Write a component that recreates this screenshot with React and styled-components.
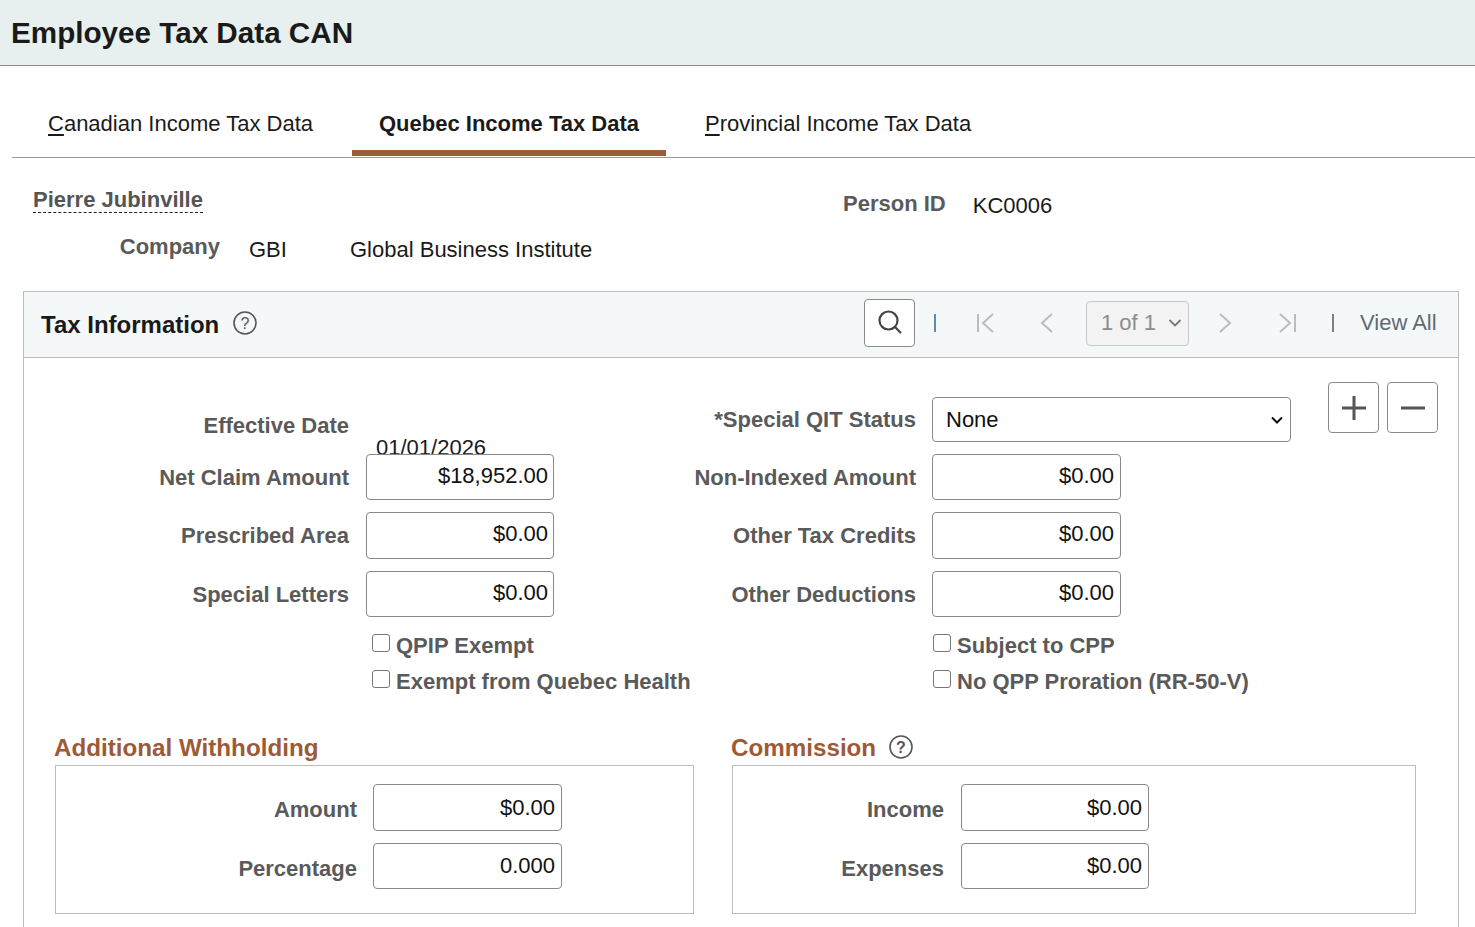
import React from "react";
import styled, { createGlobalStyle } from "styled-components";

const Global = createGlobalStyle`
  html, body { margin: 0; padding: 0; background: #fff; height: 927px; overflow: hidden; }
  body { font-family: "Liberation Sans", Arial, sans-serif; color: #000; }
  input, select { font-family: inherit; }
`;

const Page = styled.div`
  width: 1475px;
  height: 927px;
  overflow: hidden;
`;
const Banner = styled.header`
  height: 65px;
  box-sizing: content-box;
  background: #e8f0ef;
  border-bottom: 1px solid #8a8a8a;
  display: flex;
  align-items: center;
  padding-left: 11px;
`;
const Title = styled.h1`
  margin: 0;
  font-size: 29.65px;
  font-weight: 700;
  color: #1a1a1a;
`;
const TabBar = styled.nav`
  margin: 34px 0 0 12px;
  height: 57px;
  border-bottom: 1px solid #9a9a9a;
  display: flex;
  padding-left: 9px;
  gap: 12px;
`;
const Tab = styled.a`
  box-sizing: border-box;
  height: 56px;
  border-bottom: 6px solid ${p => (p.$active ? "#9d5a36" : "transparent")};
  padding: 0 27px 2px;
  display: flex;
  align-items: center;
  font-size: 22px;
  font-weight: ${p => (p.$active ? 700 : 400)};
  color: #1a1a1a;
  u { text-underline-offset: 3px; }
`;
const InfoRow = styled.div`
  display: flex;
  align-items: center;
  padding: ${p => p.$pt || 0}px 0 0 33px;
  height: ${p => p.$h}px;
`;
const PersonLink = styled.a`
  width: 810px;
  margin-top: -11px;
  font-size: 22px;
  font-weight: 700;
  color: #555;
  span { border-bottom: 1px dashed #222; padding-bottom: 0; }
`;
const InfoLabel = styled.span`
  font-size: 22px;
  font-weight: 700;
  color: #5a5a5a;
  text-align: right;
  width: ${p => (p.$w ? p.$w + "px" : "auto")};
  margin-top: ${p => p.$mt || -4}px;
`;
const InfoValue = styled.span`
  font-size: 22px;
  color: #1a1a1a;
  margin-left: ${p => p.$ml || 0}px;
  width: ${p => (p.$w ? p.$w + "px" : "auto")};
`;
const Panel = styled.section`
  margin: 20px 16px 0 23px;
  border: 1px solid #bdbdbd;
  border-bottom: none;
  height: 640px;
`;
const PanelHead = styled.div`
  height: 65px;
  background: #f4f8f8;
  border-bottom: 1px solid #bdbdbd;
  display: flex;
  align-items: center;
  padding: 0 22px 0 17px;
`;
const PanelTitle = styled.h2`
  margin: 0 13px 0 0;
  font-size: 24px;
  font-weight: 700;
  color: #1a1a1a;
`;
const HelpMark = styled.svg`
  flex: none;
  margin-bottom: ${p => p.$mb || 0}px;
`;
const HelpIcon = ({ mb }) => (
  <HelpMark $mb={mb} width="26" height="26" viewBox="0 0 26 26" fill="none">
    <circle cx="13" cy="13" r="11" stroke="#555" strokeWidth="1.6" />
    <text x="13" y="18.5" textAnchor="middle" fontSize="16" fontFamily="Liberation Sans" fill="#555">?</text>
  </HelpMark>
);
const Pager = styled.div`
  margin-left: auto;
  margin-bottom: 3px;
  display: flex;
  align-items: center;
`;
const SearchBtn = styled.button`
  width: 51px;
  height: 48px;
  padding: 0;
  background: #fff;
  border: 1px solid #8a8a8a;
  border-radius: 4px;
  display: flex;
  align-items: center;
  justify-content: center;
`;
const Slot = styled.span`
  width: ${p => p.$w}px;
  display: flex;
  align-items: center;
  justify-content: center;
`;
const Sep = styled.i`
  width: 2px;
  height: 18px;
  background: ${p => p.$c};
`;
const PageSelect = styled.div`
  margin-left: 8px;
  width: 103px;
  height: 45px;
  box-sizing: border-box;
  border: 1px solid #c9c9c9;
  border-radius: 4px;
  background: #f3f3f3;
  color: #8c8c8c;
  font-size: 22px;
  display: flex;
  align-items: center;
  justify-content: space-between;
  padding: 0 6px 0 14px;
`;
const ViewAll = styled.a`
  margin-left: 7px;
  width: 76px;
  white-space: nowrap;
  font-size: 22px;
  color: #5f6b73;
`;
const Body = styled.div`
  padding-top: 24px;
`;
const Row = styled.div`
  display: grid;
  grid-template-columns: 325px 205px 362px 1fr;
  height: ${p => p.$h || 46.3}px;
  margin-bottom: ${p => (p.$mb === undefined ? 12 : p.$mb)}px;
`;
const Label = styled.label`
  align-self: ${p => p.$self || "center"};
  text-align: right;
  font-size: 22px;
  font-weight: 700;
  color: #5a5a5a;
  white-space: nowrap;
  padding-top: ${p => (p.$pt === undefined ? 2 : p.$pt)}px;
  padding-bottom: ${p => p.$pb || 0}px;
`;
const Cell = styled.div`
  padding-left: ${p => p.$pl || 16}px;
  min-width: 0;
`;
const Value = styled.input`
  display: block;
  box-sizing: border-box;
  width: ${p => p.$w || 188}px;
  height: 100%;
  background: #fff;
  border: 1px solid #8a8a8a;
  border-radius: 4px;
  text-align: right;
  font-size: 22px;
  color: #111;
  padding: 0 ${p => p.$pr || 6}px ${p => (p.$pb === undefined ? 2 : p.$pb)}px 6px;
  outline: none;
`;
const DateText = styled.div`
  padding: 53px 0 0 10px;
  height: 60px;
  box-sizing: border-box;
  font-size: 22px;
  color: #1a1a1a;
  white-space: nowrap;
`;
const SelectCell = styled(Cell)`
  display: flex;
`;
const StatusSelect = styled.select`
  appearance: none;
  align-self: flex-end;
  width: 359px;
  height: 45px;
  box-sizing: border-box;
  border: 1px solid #8a8a8a;
  border-radius: 4px;
  background: #fff url("data:image/svg+xml,%3Csvg xmlns='http://www.w3.org/2000/svg' width='12' height='8' viewBox='0 0 12 8' fill='none' stroke='%23111' stroke-width='2'%3E%3Cpath d='M1 1.500l5 5 5-5'/%3E%3C/svg%3E") no-repeat right 7px center;
  font-size: 22px;
  color: #111;
  padding: 0 24px 0 13px;
`;
const EditButtons = styled.div`
  margin-left: 37px;
  display: flex;
  gap: 8px;
`;
const EditBtn = styled.button`
  width: 51px;
  height: 51px;
  padding: 0;
  background: #fff;
  border: 1px solid #8a8a8a;
  border-radius: 4px;
  display: flex;
  align-items: center;
  justify-content: center;
`;
const CheckRow = styled.div`
  display: grid;
  grid-template-columns: 348px 561px 1fr;
  height: 36px;
  align-items: center;
`;
const CheckLabel = styled.label`
  grid-column: ${p => p.$col};
  display: flex;
  align-items: center;
  font-size: 22px;
  font-weight: 700;
  color: #5a5a5a;
  white-space: nowrap;
`;
const Check = styled.input`
  appearance: none;
  width: 18px;
  height: 18px;
  margin: -6px 6px 0 0;
  border: 1px solid #767676;
  border-radius: 3px;
  background: #fff;
  flex: none;
`;
const Groups = styled.div`
  display: flex;
  margin-top: 31px;
  padding-left: 31px;
`;
const Group = styled.div`
  width: ${p => p.$w}px;
  margin-right: ${p => p.$mr || 0}px;
`;
const GroupTitle = styled.h3`
  margin: 0 0 0 -1px;
  height: 34px;
  display: flex;
  align-items: center;
  gap: 12px;
  font-size: 24.2px;
  font-weight: 700;
  color: #9d5a36;
  white-space: nowrap;
`;
const GroupBox = styled.div`
  height: 149px;
  box-sizing: border-box;
  border: 1px solid #bdbdbd;
  padding-top: 18px;
`;
const GroupRow = styled.div`
  display: grid;
  grid-template-columns: ${p => p.$label}px 1fr;
  height: ${p => p.$h}px;
  margin-bottom: 12px;
`;

const PagerArrow = styled.svg`
  fill: none;
  stroke: #bcbcbc;
  stroke-width: 2;
`;
const FirstIcon = () => (
  <PagerArrow width="20" height="22" viewBox="0 0 20 22"><path d="M2 2v18M17 2L7 11l10 9" /></PagerArrow>
);
const PrevIcon = () => (
  <PagerArrow width="14" height="22" viewBox="0 0 14 22"><path d="M12 2L2 11l10 9" /></PagerArrow>
);
const NextIcon = () => (
  <PagerArrow width="14" height="22" viewBox="0 0 14 22"><path d="M2 2l10 9-10 9" /></PagerArrow>
);
const LastIcon = () => (
  <PagerArrow width="20" height="22" viewBox="0 0 20 22"><path d="M18 2v18M3 2l10 9-10 9" /></PagerArrow>
);

export default function App() {
  return (
    <Page>
      <Global />
      <Banner><Title>Employee Tax Data CAN</Title></Banner>
      <TabBar>
        <Tab><span><u>C</u>anadian Income Tax Data</span></Tab>
        <Tab $active>Quebec Income Tax Data</Tab>
        <Tab><span><u>P</u>rovincial Income Tax Data</span></Tab>
      </TabBar>
      <InfoRow $pt={25} $h={45}>
        <PersonLink><span>Pierre Jubinville</span></PersonLink>
        <InfoLabel>Person ID</InfoLabel>
        <InfoValue $ml={27}>KC0006</InfoValue>
      </InfoRow>
      <InfoRow $h={43}>
        <InfoLabel $w={187} $mt={-6}>Company</InfoLabel>
        <InfoValue $ml={29} $w={101}>GBI</InfoValue>
        <InfoValue>Global Business Institute</InfoValue>
      </InfoRow>
      <Panel>
        <PanelHead>
          <PanelTitle>Tax Information</PanelTitle>
          <HelpIcon mb={4} />
          <Pager>
            <SearchBtn aria-label="Search">
              <svg width="26" height="28" viewBox="0 0 26 28" fill="none" stroke="#444" strokeWidth="2.2">
                <circle cx="11.5" cy="11.500" r="9" />
                <path d="M18 18l6 6" />
              </svg>
            </SearchBtn>
            <Slot $w={40}><Sep $c="#5f8bad" /></Slot>
            <Slot $w={61}><FirstIcon /></Slot>
            <Slot $w={62}><PrevIcon /></Slot>
            <PageSelect>
              1 of 1
              <svg width="14" height="10" viewBox="0 0 14 10" fill="none" stroke="#777" strokeWidth="1.8">
                <path d="M1.5 2l5.5 5.5L12.500 2" />
              </svg>
            </PageSelect>
            <Slot $w={72}><NextIcon /></Slot>
            <Slot $w={52}><LastIcon /></Slot>
            <Slot $w={40}><Sep $c="#7f7f7f" /></Slot>
            <ViewAll>View All</ViewAll>
          </Pager>
        </PanelHead>
        <Body>
          <Row $h={60}>
            <Label $self="end" $pt={0} $pb={3}>Effective Date</Label>
            <Cell $pl={17}><DateText>01/01/2026</DateText></Cell>
            <Label $self="end" $pt={0} $pb={9}>*Special QIT Status</Label>
            <SelectCell>
              <StatusSelect defaultValue="None"><option>None</option></StatusSelect>
              <EditButtons>
                <EditBtn aria-label="Add">
                  <svg width="26" height="26" viewBox="0 0 26 26" fill="none" stroke="#555" strokeWidth="3"><path d="M13 1v24M1 13h24" /></svg>
                </EditBtn>
                <EditBtn aria-label="Delete">
                  <svg width="26" height="26" viewBox="0 0 26 26" fill="none" stroke="#555" strokeWidth="3"><path d="M1 13h24" /></svg>
                </EditBtn>
              </EditButtons>
            </SelectCell>
          </Row>
          <Row>
            <Label>Net Claim Amount</Label>
            <Cell $pl={17}><Value readOnly defaultValue="$18,952.00" $pr={5} /></Cell>
            <Label>Non-Indexed Amount</Label>
            <Cell><Value readOnly defaultValue="$0.00" $w={189} /></Cell>
          </Row>
          <Row>
            <Label>Prescribed Area</Label>
            <Cell $pl={17}><Value readOnly defaultValue="$0.00" $pr={5} /></Cell>
            <Label>Other Tax Credits</Label>
            <Cell><Value readOnly defaultValue="$0.00" $w={189} /></Cell>
          </Row>
          <Row $mb={11.6}>
            <Label>Special Letters</Label>
            <Cell $pl={17}><Value readOnly defaultValue="$0.00" $pr={5} /></Cell>
            <Label>Other Deductions</Label>
            <Cell><Value readOnly defaultValue="$0.00" $w={189} /></Cell>
          </Row>
          <CheckRow>
            <CheckLabel $col={2}><Check type="checkbox" />QPIP Exempt</CheckLabel>
            <CheckLabel $col={3}><Check type="checkbox" />Subject to CPP</CheckLabel>
          </CheckRow>
          <CheckRow>
            <CheckLabel $col={2}><Check type="checkbox" />Exempt from Quebec Health</CheckLabel>
            <CheckLabel $col={3}><Check type="checkbox" />No QPP Proration (RR-50-V)</CheckLabel>
          </CheckRow>
          <Groups>
            <Group $w={639} $mr={38}>
              <GroupTitle>Additional Withholding</GroupTitle>
              <GroupBox>
                <GroupRow $label={301} $h={47}>
                  <Label $pt={5}>Amount</Label>
                  <Cell><Value readOnly defaultValue="$0.00" $w={189} $pb={0} /></Cell>
                </GroupRow>
                <GroupRow $label={301} $h={46}>
                  <Label $pt={6}>Percentage</Label>
                  <Cell><Value readOnly defaultValue="0.000" $w={189} $pb={0} /></Cell>
                </GroupRow>
              </GroupBox>
            </Group>
            <Group $w={684}>
              <GroupTitle>Commission <HelpIcon mb={2} /></GroupTitle>
              <GroupBox>
                <GroupRow $label={211} $h={47}>
                  <Label $pt={5}>Income</Label>
                  <Cell $pl={17}><Value readOnly defaultValue="$0.00" $pb={0} /></Cell>
                </GroupRow>
                <GroupRow $label={211} $h={46}>
                  <Label $pt={6}>Expenses</Label>
                  <Cell $pl={17}><Value readOnly defaultValue="$0.00" $pb={0} /></Cell>
                </GroupRow>
              </GroupBox>
            </Group>
          </Groups>
        </Body>
      </Panel>
    </Page>
  );
}
